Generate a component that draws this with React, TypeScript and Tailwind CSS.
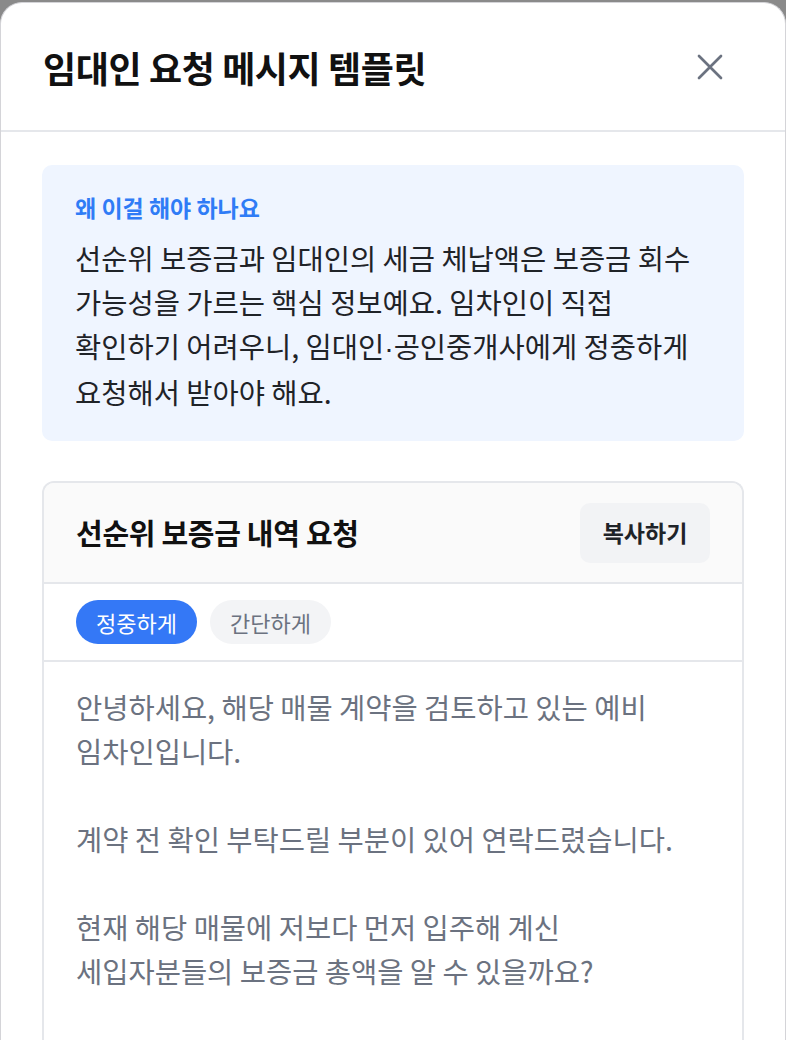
import React, { useState } from "react";

const FONT = {
  fontFamily: '"Noto Sans CJK KR", "Noto Sans", sans-serif',
};

const TEMPLATES = {
  polite: [
    "안녕하세요, 해당 매물 계약을 검토하고 있는 예비",
    "임차인입니다.",
    "",
    "계약 전 확인 부탁드릴 부분이 있어 연락드렸습니다.",
    "",
    "현재 해당 매물에 저보다 먼저 입주해 계신",
    "세입자분들의 보증금 총액을 알 수 있을까요?",
    "",
  ],
  simple: [
    "안녕하세요, 해당 매물 계약 예정인 임차인입니다.",
    "",
    "선순위 세입자분들의 보증금 총액을",
    "알려주실 수 있을까요?",
    "",
  ],
};

function CloseIcon() {
  return (
    <svg width="26" height="26" viewBox="0 0 26 26" fill="none">
      <path
        d="M2 2L24 24M24 2L2 24"
        stroke="#6b7280"
        strokeWidth="2.7"
        strokeLinecap="round"
      />
    </svg>
  );
}

export default function App() {
  const [tone, setTone] = useState<"polite" | "simple">("polite");
  const lines = TEMPLATES[tone];

  return (
    <div className="h-[1040px] overflow-hidden bg-[#8a8a8a] pt-[2px]" style={FONT}>
      <div className="h-[1100px] rounded-t-[22px] border-x border-t border-[#d4d4d8] bg-white">
        {/* Header */}
        <div className="flex h-[129px] items-center justify-between border-b-2 border-[#e5e7eb] pl-[42px] pr-[62px]">
          <h1 className="text-[36px] font-bold leading-none tracking-[-0.4px] text-[#111111]">
            임대인 요청 메시지 템플릿
          </h1>
          <button className="flex h-[26px] w-[26px] items-center justify-center">
            <CloseIcon />
          </button>
        </div>

        <div className="flex flex-col gap-[40px] px-[41px] pt-[33px]">
          {/* Why box */}
          <div className="rounded-[10px] bg-[#eff5ff] px-[33px] pb-[27px] pt-[27px]">
            <p className="text-[23px] font-semibold leading-[30px] text-[#2f7cf6]">
              왜 이걸 해야 하나요
            </p>
            <div className="mt-[14px] whitespace-nowrap text-[28.5px] leading-[44px] text-[#1f2328]">
              <p>선순위 보증금과 임대인의 세금 체납액은 보증금 회수</p>
              <p>가능성을 가르는 핵심 정보예요. 임차인이 직접</p>
              <p>
                확인하기 어려우니, 임대인<span className="font-['Liberation_Sans']">·</span>공인중개사에게 정중하게
              </p>
              <p>요청해서 받아야 해요.</p>
            </div>
          </div>

          {/* Template card */}
          <div className="overflow-hidden rounded-t-[12px] border-x-2 border-t-2 border-[#e5e7eb]">
            <div className="flex h-[99px] items-center justify-between bg-[#fafafa] px-[32px]">
              <h2 className="text-[29px] font-bold leading-none tracking-[-0.3px] text-[#111111]">
                선순위 보증금 내역 요청
              </h2>
              <button className="h-[60px] w-[130px] rounded-[10px] bg-[#f2f3f5] text-[23px] font-semibold text-[#1f2328]">
                복사하기
              </button>
            </div>

            <div className="flex h-[80px] items-center gap-[13px] border-y-2 border-[#e5e7eb] px-[32px]">
              <button
                onClick={() => setTone("polite")}
                className={
                  tone === "polite"
                    ? "h-[44px] rounded-full bg-[#3478f6] px-[20px] text-[22px] text-white"
                    : "h-[44px] rounded-full bg-[#f3f4f6] px-[20px] text-[22px] text-[#6b7280]"
                }
              >
                정중하게
              </button>
              <button
                onClick={() => setTone("simple")}
                className={
                  tone === "simple"
                    ? "h-[44px] rounded-full bg-[#3478f6] px-[20px] text-[22px] text-white"
                    : "h-[44px] rounded-full bg-[#f3f4f6] px-[20px] text-[22px] text-[#6b7280]"
                }
              >
                간단하게
              </button>
            </div>

            <div className="px-[32px] pt-[23px] pb-[40px]">
              {lines.map((line, i) => (
                <p
                  key={i}
                  className="h-[44px] whitespace-nowrap text-[28.5px] leading-[44px] text-[#6b7280]"
                >
                  {line}
                </p>
              ))}
            </div>
          </div>
        </div>
      </div>
    </div>
  );
}
